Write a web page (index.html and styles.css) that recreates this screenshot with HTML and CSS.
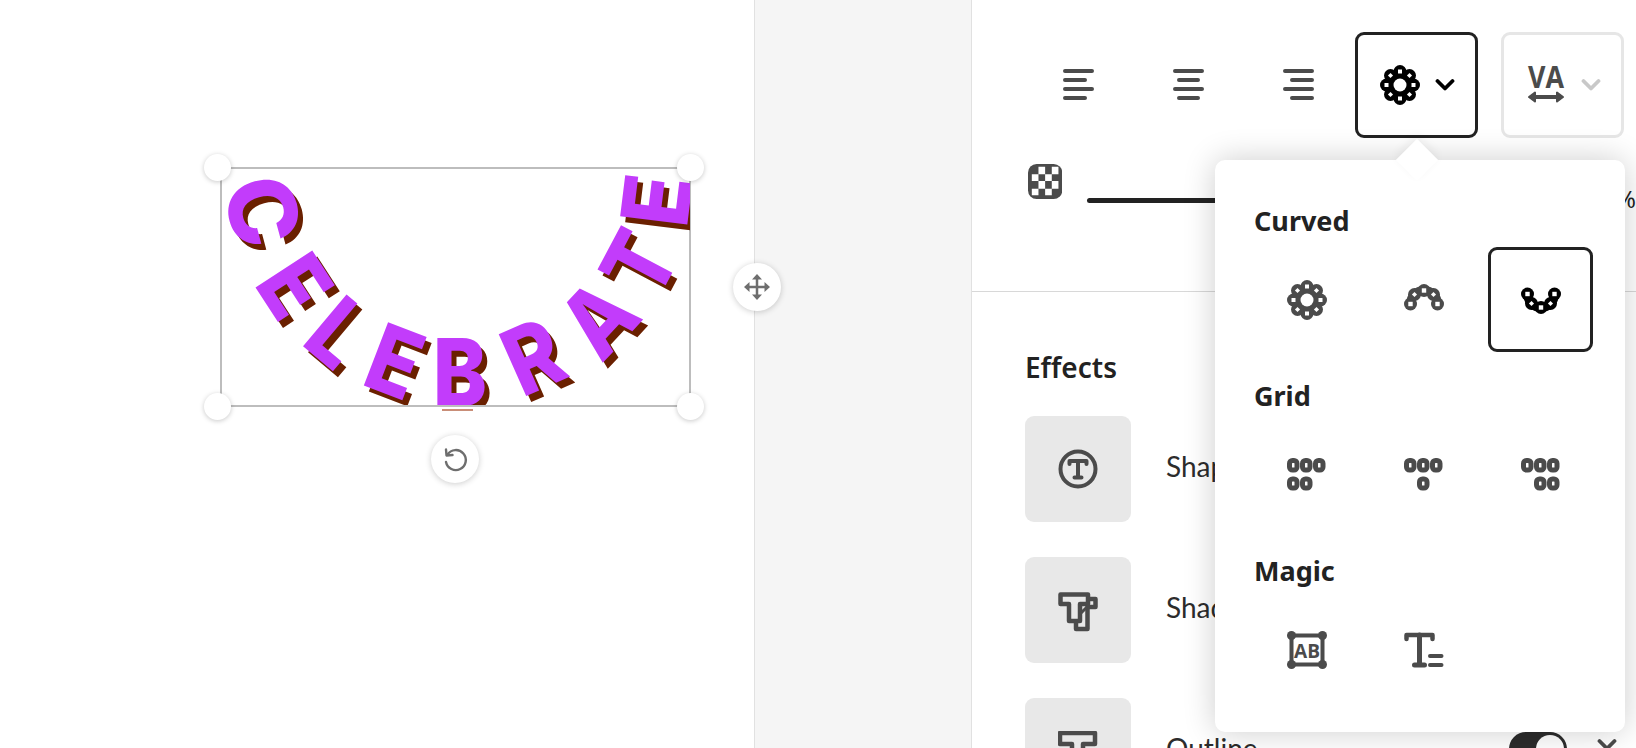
FILE: index.html
```html
<!DOCTYPE html>
<html lang="en">
<head>
    <meta charset="UTF-8">
    <meta name="viewport" content="width=device-width, initial-scale=1.0">
    <title>Text effects</title>
    <link rel="stylesheet" href="styles.css">
</head>
<body>
    <svg class="defs" width="0" height="0">
        <symbol id="i-ring" viewBox="0 0 40 40">
            <g fill="currentColor">
                <circle cx="20" cy="20" r="15"/>
                <circle cx="20" cy="6.500" r="6.500"/><circle cx="29.500" cy="10.500" r="6.500"/><circle cx="33.500" cy="20" r="6.500"/><circle cx="29.500" cy="29.500" r="6.500"/>
                <circle cx="20" cy="33.500" r="6.500"/><circle cx="10.500" cy="29.500" r="6.500"/><circle cx="6.500" cy="20" r="6.500"/><circle cx="10.500" cy="10.500" r="6.500"/>
            </g>
            <circle cx="20" cy="20" r="6.500" fill="#fff"/>
            <g fill="#fff">
                <rect x="18" y="4.500" width="4" height="4"/><rect x="31.500" y="18" width="4" height="4"/>
                <rect x="18" y="31.500" width="4" height="4"/><rect x="4.500" y="18" width="4" height="4"/>
                <rect x="27.700" y="8.700" width="3.600" height="3.600" transform="rotate(45 29.500 10.500)"/><rect x="27.700" y="27.700" width="3.600" height="3.600" transform="rotate(45 29.500 29.500)"/>
                <rect x="8.700" y="27.700" width="3.600" height="3.600" transform="rotate(45 10.500 29.500)"/><rect x="8.700" y="8.700" width="3.600" height="3.600" transform="rotate(45 10.500 10.500)"/>
            </g>
        </symbol>
        <symbol id="i-arch" viewBox="0 0 40 28">
            <path d="M6.500 20 A13.500 13.500 0 0 1 33.500 20" fill="none" stroke="currentColor" stroke-width="9"/>
            <g fill="currentColor">
                <circle cx="6.500" cy="20" r="6.500"/><circle cx="10.500" cy="10.500" r="6.500"/><circle cx="20" cy="6.500" r="6.500"/><circle cx="29.500" cy="10.500" r="6.500"/><circle cx="33.500" cy="20" r="6.500"/>
            </g>
            <g fill="#fff">
                <rect x="4.300" y="17.800" width="4.400" height="4.400"/><rect x="31.300" y="17.800" width="4.400" height="4.400"/><rect x="17.800" y="4.300" width="4.400" height="4.400"/>
                <rect x="8.700" y="8.700" width="3.600" height="3.600" transform="rotate(45 10.500 10.500)"/><rect x="27.700" y="8.700" width="3.600" height="3.600" transform="rotate(45 29.500 10.500)"/>
            </g>
        </symbol>
        <symbol id="i-chev" viewBox="0 0 20 14">
            <path d="M2.500 3 L10 10.500 L17.500 3" fill="none" stroke="currentColor" stroke-width="3.800" stroke-linecap="round" stroke-linejoin="round"/>
        </symbol>
    </svg>

    <main class="canvas">
        <div class="selection">
            <svg class="art" width="468" height="237" viewBox="0 0 468 237">
                <g class="word">
                    <text transform="translate(41 43) rotate(75)" y="34">C</text>
                    <text transform="translate(73 118) rotate(57) scale(.88 1)" y="34">E</text>
                    <text transform="translate(117 164) rotate(40) scale(.88 1)" y="34">L</text>
                    <text transform="translate(173 193) rotate(21) scale(.88 1)" y="34">E</text>
                    <text transform="translate(238 204) scale(.88 1)" y="34">B</text>
                    <text transform="translate(311 188) rotate(-24) scale(.88 1)" y="34">R</text>
                    <text transform="translate(376 150) rotate(-47) scale(.88 1)" y="34">A</text>
                    <text transform="translate(417 95) rotate(-62) scale(.88 1)" y="34">T</text>
                    <text transform="translate(434 32) rotate(-83) scale(.88 1)" y="34">E</text>
                </g>
            </svg>
            <span class="leftover"></span>
            <span class="handle tl"></span>
            <span class="handle tr"></span>
            <span class="handle bl"></span>
            <span class="handle br"></span>
            <span class="round-btn rotate">
                <svg width="28" height="28" viewBox="0 0 28 28" fill="none" stroke="#6e6e6e" stroke-width="2.400" stroke-linecap="round" stroke-linejoin="round">
                    <path d="M6.500 9.500 A10 10 0 1 1 5 17"/>
                    <path d="M5 4.500 L5.500 10.500 L11.500 10"/>
                </svg>
            </span>
        </div>
        <span class="round-btn move">
            <svg width="26" height="26" viewBox="0 0 26 26" fill="#6e6e6e">
                <rect x="11.750" y="4" width="2.500" height="18"/>
                <rect x="4" y="11.750" width="18" height="2.500"/>
                <path d="M13 0 L18 5.500 H8 Z M13 26 L8 20.500 H18 Z M0 13 L5.500 8 V18 Z M26 13 L20.500 18 V8 Z"/>
            </svg>
        </span>
    </main>

    <div class="gutter"></div>

    <aside class="panel">
        <div class="top">
            <div class="toolbar">
                <button class="tool">
                    <svg width="31" height="34" viewBox="0 0 31 34" class="bars"><path d="M2 3 H29 M2 12 H22 M2 21 H29 M2 30 H22"/></svg>
                </button>
                <button class="tool">
                    <svg width="31" height="34" viewBox="0 0 31 34" class="bars"><path d="M2 3 H29 M6 12 H25 M2 21 H29 M6 30 H25"/></svg>
                </button>
                <button class="tool">
                    <svg width="31" height="34" viewBox="0 0 31 34" class="bars"><path d="M2 3 H29 M9 12 H29 M2 21 H29 M9 30 H29"/></svg>
                </button>
                <button class="drop active">
                    <svg class="ico" width="40" height="40"><use href="#i-ring"/></svg>
                    <svg class="chev" width="20" height="14"><use href="#i-chev"/></svg>
                </button>
                <button class="drop off">
                    <svg width="40" height="40" viewBox="0 0 40 40" class="va">
                        <text x="20" y="23" text-anchor="middle" textLength="36" lengthAdjust="spacingAndGlyphs">VA</text>
                        <path d="M6 32 H34" fill="none" stroke="#4b4b4b" stroke-width="4"/>
                        <path d="M3 32 L9 27.500 V36.500 Z M37 32 L31 27.500 V36.500 Z" fill="#4b4b4b" stroke="#4b4b4b" stroke-width="2" stroke-linejoin="round"/>
                    </svg>
                    <svg class="chev" width="20" height="14"><use href="#i-chev"/></svg>
                </button>
            </div>
            <div class="opacity">
                <svg width="36" height="37" viewBox="0 0 36 37">
                    <rect width="36" height="37" rx="9" fill="#4b4b4b"/>
                    <path fill="#fff" d="M11 3 h7 v8 h-7 z M25 3 h7 v8 h-7 z M4 11 h7 v7 h-7 z M18 11 h7 v7 h-7 z M11 18 h7 v8 h-7 z M25 18 h7 v8 h-7 z M4 26 h7 v7 h-7 z M18 26 h7 v7 h-7 z"/>
                </svg>
                <div class="slider"></div>
                <span class="pct">%</span>
            </div>
        </div>

        <section class="effects">
            <h3>Effects</h3>
            <div class="effect">
                <span class="tile">
                    <svg width="40" height="40" viewBox="0 0 40 40" fill="none" stroke="#4b4b4b">
                        <circle cx="20" cy="20" r="17.500" stroke-width="4"/>
                        <path d="M11.500 15 V12 H28.500 V15 M20 12 V28.500 M16.500 28.500 H23.500" stroke-width="4" stroke-linecap="round" stroke-linejoin="round"/>
                    </svg>
                </span>
                <span class="label">Shape</span>
            </div>
            <div class="effect">
                <span class="tile">
                    <svg class="shadow-ico" width="40" height="40" viewBox="0 0 40 40" fill="none" stroke="#4b4b4b" stroke-width="4.500" stroke-linejoin="round">
                        <path d="M2.500 2.500 H30 V12 H22 V29 H11 V12 H2.500 Z"/>
                        <path d="M30 7 H37.500 V15 H29.500 V37 H18 V29"/>
                        <path d="M22 22 L29 15" stroke-width="3"/>
                    </svg>
                </span>
                <span class="label">Shadow</span>
            </div>
            <div class="effect">
                <span class="tile">
                    <svg width="40" height="40" viewBox="0 0 40 40" fill="none" stroke="#4b4b4b" stroke-width="4.500" stroke-linejoin="round">
                        <path d="M2 2 H37 V13 H25 V38 H14 V13 H2 Z"/>
                    </svg>
                </span>
                <span class="label">Outline</span>
                <span class="toggle"></span>
                <svg class="chev outline-chev" width="20" height="14"><use href="#i-chev"/></svg>
            </div>
        </section>

        <div class="popover">
            <h4>Curved</h4>
            <div class="choices">
                <button class="choice"><svg width="40" height="40"><use href="#i-ring"/></svg></button>
                <button class="choice"><svg class="arch" width="40" height="28"><use href="#i-arch"/></svg></button>
                <button class="choice picked"><svg class="smile" width="40" height="28"><use href="#i-arch"/></svg></button>
            </div>
            <h4>Grid</h4>
            <div class="choices">
                <button class="choice">
                    <svg class="zeros" width="40" height="34" viewBox="0 0 40 34"><rect x="2.500" y="2.500" width="7.500" height="9.500" rx="3"/><rect x="15.500" y="2.500" width="7.500" height="9.500" rx="3"/><rect x="28.500" y="2.500" width="7.500" height="9.500" rx="3"/><rect x="2.500" y="21" width="7.500" height="9" rx="3"/><rect x="15.500" y="21" width="7.500" height="9" rx="3"/></svg>
                </button>
                <button class="choice">
                    <svg class="zeros" width="40" height="34" viewBox="0 0 40 34"><rect x="2.500" y="2.500" width="7.500" height="9.500" rx="3"/><rect x="15.500" y="2.500" width="7.500" height="9.500" rx="3"/><rect x="28.500" y="2.500" width="7.500" height="9.500" rx="3"/><rect x="15.500" y="21" width="7.500" height="9" rx="3"/></svg>
                </button>
                <button class="choice">
                    <svg class="zeros" width="40" height="34" viewBox="0 0 40 34"><rect x="2.500" y="2.500" width="7.500" height="9.500" rx="3"/><rect x="15.500" y="2.500" width="7.500" height="9.500" rx="3"/><rect x="28.500" y="2.500" width="7.500" height="9.500" rx="3"/><rect x="15.500" y="21" width="7.500" height="9" rx="3"/><rect x="28.500" y="21" width="7.500" height="9" rx="3"/></svg>
                </button>
            </div>
            <h4>Magic</h4>
            <div class="choices">
                <button class="choice">
                    <svg width="40" height="38" viewBox="0 0 40 38" class="ab">
                        <rect x="4.500" y="4.500" width="31" height="29" fill="none" stroke="#4b4b4b" stroke-width="4"/>
                        <circle cx="4.500" cy="4.500" r="4.500"/><circle cx="35.500" cy="4.500" r="4.500"/><circle cx="4.500" cy="33.500" r="4.500"/><circle cx="35.500" cy="33.500" r="4.500"/>
                        <text x="20" y="26.500" text-anchor="middle" textLength="26" lengthAdjust="spacingAndGlyphs">AB</text>
                    </svg>
                </button>
                <button class="choice">
                    <svg width="40" height="36" viewBox="0 0 40 36" fill="none" stroke="#4b4b4b" stroke-linecap="round" stroke-linejoin="round">
                        <path d="M2.500 7 V3 H28.500 V7" stroke-width="4.500"/>
                        <path d="M15.500 3 V33 M10.500 33 H20.500" stroke-width="5"/>
                        <path d="M26 24 H37.500 M26 33 H37.500" stroke-width="4"/>
                    </svg>
                </button>
            </div>
        </div>
    </aside>
</body>
</html>
```

FILE: styles.css
```css
* {
    box-sizing: border-box;
}
html, body {
    height: 100%;
}
body {
    margin: 0;
    display: flex;
    overflow: hidden;
    height: 748px;
    background: #fff;
    color: #222;
    font-family: "Noto Sans", sans-serif;
}
button {
    padding: 0;
    border: none;
    background: none;
    font: inherit;
}
.defs {
    position: absolute;
}

/* canvas */
.canvas {
    position: relative;
    flex: 0 0 755px;
    border-right: 1px solid #e1e1e1;
}
.selection {
    position: absolute;
    left: 220px;
    top: 167px;
    width: 471px;
    height: 240px;
    border: 2px solid #bdbdbd;
}
.art {
    display: block;
    margin: -1px 0 0 0;
    overflow: hidden;
}
.word {
    filter: drop-shadow(5px 6px 0 #6a2000);
}
.word text {
    font-family: "Inter", sans-serif;
    font-weight: 800;
    font-size: 93px;
    fill: #c23cfb;
    text-anchor: middle;
}
.leftover {
    position: absolute;
    left: 220px;
    top: 240px;
    width: 31px;
    height: 2px;
    background: #c98e78;
}
.handle {
    position: absolute;
    width: 27px;
    height: 27px;
    border-radius: 50%;
    background: #fff;
    box-shadow: 0 1px 5px rgba(0, 0, 0, 0.22);
}
.tl { left: -18px; top: -15px; }
.tr { right: -15px; top: -15px; }
.bl { left: -18px; bottom: -15px; }
.br { right: -15px; bottom: -15px; }
.round-btn {
    position: absolute;
    display: flex;
    align-items: center;
    justify-content: center;
    width: 48px;
    height: 48px;
    border-radius: 50%;
    background: #fff;
    box-shadow: 0 1px 6px rgba(0, 0, 0, 0.2);
}
.rotate {
    left: 209px;
    top: 266px;
}
.move {
    left: 733px;
    top: 263px;
}

.gutter {
    flex: 0 0 217px;
    background: #f5f5f5;
    border-right: 1px solid #e1e1e1;
}

/* right panel */
.panel {
    position: relative;
    flex: 1;
    min-width: 0;
}
.top {
    height: 292px;
    padding: 32px 0 0 53px;
    border-bottom: 1px solid #d8d8d8;
}
.toolbar {
    display: flex;
    gap: 4px;
}
.tool {
    display: flex;
    align-items: center;
    justify-content: center;
    width: 106px;
    height: 106px;
}
.bars path {
    fill: none;
    stroke: #4b4b4b;
    stroke-width: 4;
    stroke-linecap: round;
}
.drop {
    display: flex;
    align-items: center;
    justify-content: center;
    gap: 15px;
    width: 123px;
    height: 106px;
    padding-left: 2px;
    border: 3.5px solid #222;
    border-radius: 9px;
    color: #000;
}
.drop.off {
    margin-left: 19px;
    border-color: #e6e6e6;
    color: #c8c8c8;
}
.va text {
    font-family: "Open Sans", sans-serif;
    font-weight: 700;
    font-size: 30px;
    fill: #4b4b4b;
}
.opacity {
    display: flex;
    margin-top: 25px;
    padding-left: 3px;
}
.slider {
    width: 210px;
    height: 5px;
    margin: 35px 0 0 25px;
    border-radius: 3px;
    background: #222;
}
.pct {
    margin-left: 329px;
    margin-top: 20px;
    font-size: 24px;
    line-height: 32px;
}

.effects {
    padding: 55px 0 0 53px;
}
.effects h3 {
    margin: 0 0 29px;
    font-size: 28px;
    line-height: 40px;
    font-weight: 600;
}
.effect {
    display: flex;
    align-items: flex-start;
    height: 106px;
    margin-bottom: 35px;
}
.tile {
    display: flex;
    align-items: center;
    justify-content: center;
    flex: 0 0 106px;
    height: 106px;
    border-radius: 9px;
    background: #e8e8e8;
}
.shadow-ico {
    margin-top: 3px;
}
.label {
    margin: 30px 0 0 35px;
    font-family: "Lato", sans-serif;
    font-size: 28px;
    line-height: 40px;
    color: #2c2c2c;
}
.toggle {
    position: absolute;
    left: 537px;
    top: 732px;
    width: 58px;
    height: 34px;
    border-radius: 17px;
    background: #2c2c2c;
}
.toggle::after {
    content: "";
    position: absolute;
    right: 3px;
    top: 3px;
    width: 28px;
    height: 28px;
    border-radius: 50%;
    background: #fff;
}
.outline-chev {
    position: absolute;
    left: 625px;
    top: 738px;
    color: #4b4b4b;
}

/* curved text popover */
.popover {
    position: absolute;
    left: 243px;
    top: 160px;
    width: 410px;
    height: 572px;
    padding: 40px 0 0 39px;
    border-radius: 10px;
    background: #fff;
    box-shadow: 0 0 32px rgba(0, 0, 0, 0.2);
}
.popover::before {
    content: "";
    position: absolute;
    left: 187px;
    top: -15px;
    width: 30px;
    height: 30px;
    background: #fff;
    transform: rotate(45deg);
    box-shadow: -3px -3px 10px rgba(0, 0, 0, 0.06);
}
.popover h4 {
    position: relative;
    margin: 0;
    height: 42px;
    font-size: 27px;
    line-height: 42px;
    font-weight: 700;
}
.choices {
    display: flex;
    gap: 12px;
    height: 105px;
    margin: 5px 0 23px;
}
.choice {
    display: flex;
    align-items: center;
    justify-content: center;
    width: 105px;
    height: 105px;
    border: 3.5px solid transparent;
    border-radius: 9px;
    color: #4b4b4b;
}
.choice.picked {
    border-color: #222;
    color: #000;
}
.arch {
    margin-bottom: 4px;
}
.smile {
    transform: scaleY(-1);
}
.zeros rect {
    fill: none;
    stroke: #4b4b4b;
    stroke-width: 5;
}
.ab circle {
    fill: #4b4b4b;
}
.ab text {
    font-family: "Open Sans", sans-serif;
    font-weight: 700;
    font-size: 20px;
    fill: #4b4b4b;
}
```
